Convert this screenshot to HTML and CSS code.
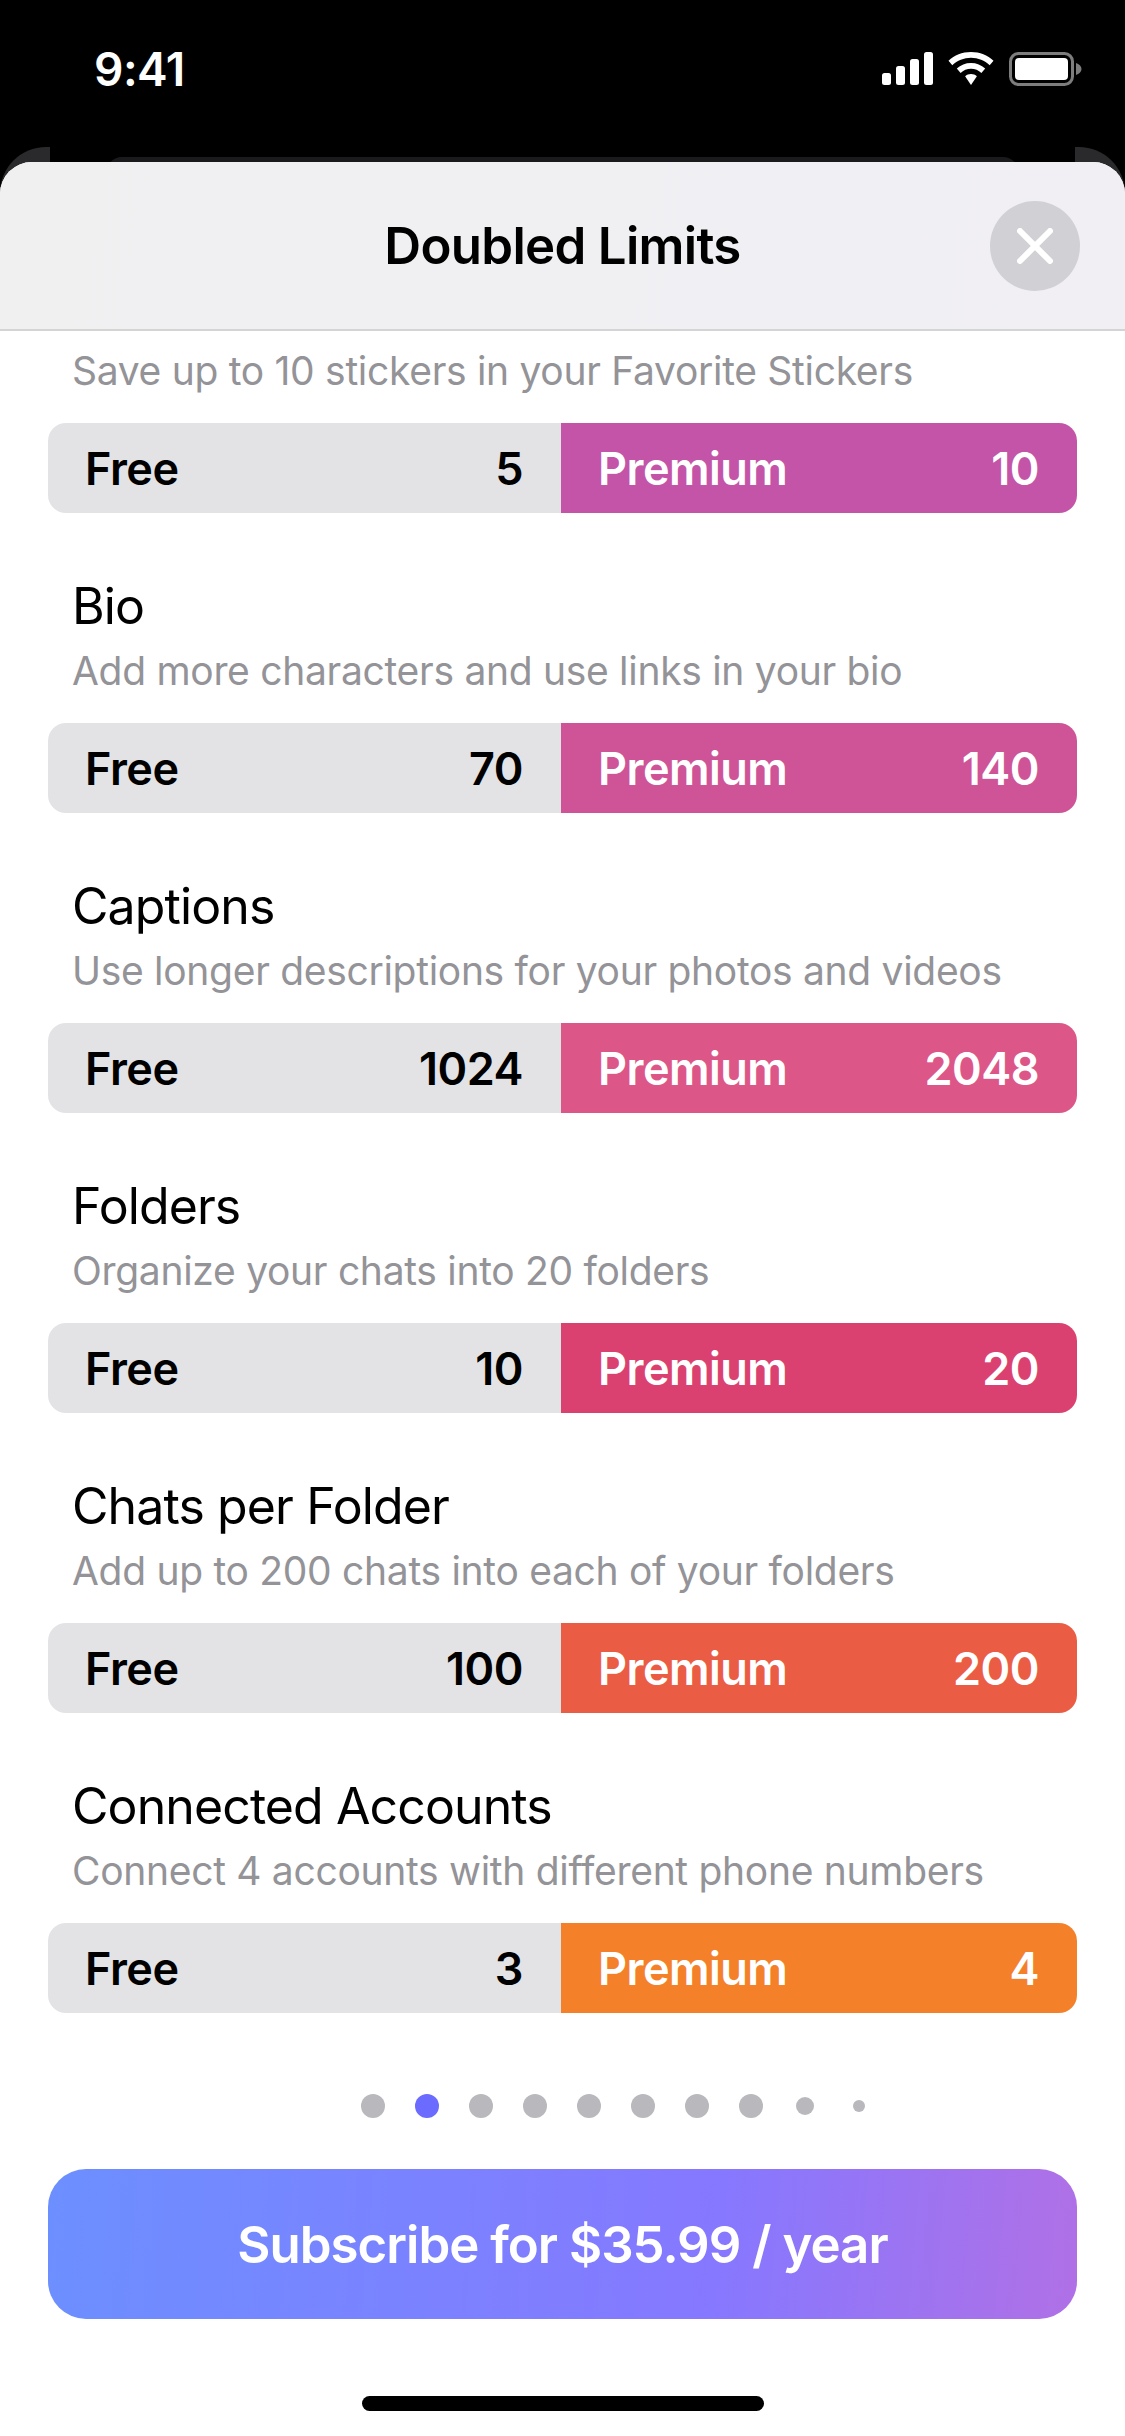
FILE: index.html
```html
<!DOCTYPE html>
<html lang="en">
<head>
  <meta charset="UTF-8">
  <meta name="viewport" content="width=device-width, initial-scale=1.0">
  <title>Doubled Limits</title>
  <link rel="stylesheet" href="styles.css">
</head>
<body>
  <div class="phone">
    <div class="status-bar">
      <span class="time">9:41</span>
      <div class="status-icons">
        <svg width="51" height="33" viewBox="0 0 51 33" fill="#fff">
          <rect x="0" y="21" width="9" height="12" rx="2.5"/>
          <rect x="14" y="14" width="9" height="19" rx="2.5"/>
          <rect x="28" y="7" width="9" height="26" rx="2.5"/>
          <rect x="42" y="0" width="9" height="33" rx="2.5"/>
        </svg>
        <svg width="46" height="33" viewBox="0 0 46 33" fill="#fff">
          <path d="M23 0C14 0 6.500 3.300 0.500 8.800L4.300 13.200C9.300 8.600 15.800 5.800 23 5.800S36.700 8.600 41.700 13.200L45.500 8.800C39.500 3.300 32 0 23 0Z"/>
          <path d="M23 11C17.500 11 12.700 13 8.800 16.500L12.600 20.900C15.400 18.400 19 16.800 23 16.800S30.600 18.400 33.400 20.900L37.200 16.500C33.300 13 28.500 11 23 11Z"/>
          <path d="M23 22C20.700 22 18.700 22.800 17.100 24.200L23 33L28.900 24.200C27.300 22.800 25.300 22 23 22Z"/>
        </svg>
        <svg width="73" height="34" viewBox="0 0 73 34">
          <rect x="1.500" y="1.500" width="62" height="31" rx="8" fill="none" stroke="#7d7d7d" stroke-width="3"/>
          <rect x="6" y="6" width="53" height="22" rx="4" fill="#fff"/>
          <path d="M67 11C70 12 72.500 14 72.500 17S70 22 67 23Z" fill="#7d7d7d"/>
        </svg>
      </div>
    </div>

    <div class="back-card back-card-left"></div>
    <div class="back-card back-card-right"></div>
    <div class="back-band"></div>

    <div class="sheet">
      <header class="sheet-header">
        <h1>Doubled Limits</h1>
        <button class="close-btn" type="button" aria-label="Close">
          <svg width="36" height="36" viewBox="0 0 36 36">
            <path d="M3 3L33 33M33 3L3 33" stroke="#fff" stroke-width="6" stroke-linecap="round"/>
          </svg>
        </button>
      </header>

      <div class="limits">
        <section class="limit limit-cut">
          <p class="limit-desc">Save up to 10 stickers in your Favorite Stickers</p>
          <div class="bar">
            <div class="bar-free"><span>Free</span><span>5</span></div>
            <div class="bar-premium c1"><span>Premium</span><span>10</span></div>
          </div>
        </section>
        <section class="limit">
          <h2>Bio</h2>
          <p class="limit-desc">Add more characters and use links in your bio</p>
          <div class="bar">
            <div class="bar-free"><span>Free</span><span>70</span></div>
            <div class="bar-premium c2"><span>Premium</span><span>140</span></div>
          </div>
        </section>
        <section class="limit">
          <h2>Captions</h2>
          <p class="limit-desc">Use longer descriptions for your photos and videos</p>
          <div class="bar">
            <div class="bar-free"><span>Free</span><span>1024</span></div>
            <div class="bar-premium c3"><span>Premium</span><span>2048</span></div>
          </div>
        </section>
        <section class="limit">
          <h2>Folders</h2>
          <p class="limit-desc">Organize your chats into 20 folders</p>
          <div class="bar">
            <div class="bar-free"><span>Free</span><span>10</span></div>
            <div class="bar-premium c4"><span>Premium</span><span>20</span></div>
          </div>
        </section>
        <section class="limit">
          <h2>Chats per Folder</h2>
          <p class="limit-desc">Add up to 200 chats into each of your folders</p>
          <div class="bar">
            <div class="bar-free"><span>Free</span><span>100</span></div>
            <div class="bar-premium c5"><span>Premium</span><span>200</span></div>
          </div>
        </section>
        <section class="limit">
          <h2>Connected Accounts</h2>
          <p class="limit-desc">Connect 4 accounts with different phone numbers</p>
          <div class="bar">
            <div class="bar-free"><span>Free</span><span>3</span></div>
            <div class="bar-premium c6"><span>Premium</span><span>4</span></div>
          </div>
        </section>
      </div>

      <div class="dots">
        <i class="dot"></i>
        <i class="dot active"></i>
        <i class="dot"></i>
        <i class="dot"></i>
        <i class="dot"></i>
        <i class="dot"></i>
        <i class="dot"></i>
        <i class="dot"></i>
        <i class="dot mid"></i>
        <i class="dot small"></i>
      </div>

      <button class="subscribe" type="button">Subscribe for $35.99 / year</button>
      <div class="home-indicator"></div>
    </div>
  </div>
</body>
</html>
```

FILE: styles.css
```css
* {
  box-sizing: border-box;
}
body {
  margin: 0;
  background: #000;
  font-family: Inter, "Liberation Sans", sans-serif;
}
.phone {
  position: relative;
  width: 1125px;
  height: 2436px;
  background: #000;
  overflow: hidden;
}

/* status bar */
.status-bar {
  height: 162px;
  display: flex;
  justify-content: space-between;
  align-items: flex-start;
  padding: 52px 43px 0 94px;
  color: #fff;
}
.time {
  font-size: 46px;
  font-weight: 600;
  line-height: 34px;
  letter-spacing: -0.5px;
}
.status-icons {
  display: flex;
  align-items: flex-start;
  gap: 15px;
}

/* cards peeking out behind the sheet */
.back-card {
  position: absolute;
  top: 147px;
  width: 50px;
  height: 60px;
  background: #2a2a2c;
}
.back-card-left {
  left: 0;
  border-top-left-radius: 46px;
}
.back-card-right {
  right: 0;
  border-top-right-radius: 46px;
}
.back-band {
  position: absolute;
  top: 157px;
  left: 106px;
  right: 106px;
  height: 20px;
  background: #1a1a1c;
  border-radius: 16px 16px 0 0;
}

.sheet {
  position: relative;
  height: 2274px;
  background: #fff;
  border-radius: 32px 32px 0 0;
  overflow: hidden;
}
.sheet-header {
  position: relative;
  height: 169px;
  display: flex;
  align-items: center;
  justify-content: center;
  background: linear-gradient(100deg, #f0f0f1 0%, #f0eff3 70%, #f1eff4 100%);
  border-bottom: 2px solid #d4d4d5;
}
.sheet-header h1 {
  margin: 0;
  font-size: 51px;
  font-weight: 600;
  letter-spacing: -0.7px;
  color: #000;
}
.close-btn {
  position: absolute;
  top: 39px;
  right: 45px;
  width: 90px;
  height: 90px;
  padding: 0;
  display: flex;
  align-items: center;
  justify-content: center;
  border: none;
  border-radius: 50%;
  background: #d1d0d5;
}

/* limit rows */
.limits {
  display: flex;
  flex-direction: column;
  gap: 63px;
  padding: 0 48px;
}
.limit h2 {
  margin: 0;
  padding-left: 24px;
  font-size: 50px;
  font-weight: 400;
  line-height: 60px;
  letter-spacing: -0.9px;
  color: #000;
}
.limit-desc {
  margin: 11px 0 0;
  padding-left: 24px;
  font-size: 39px;
  line-height: 48px;
  letter-spacing: -0.3px;
  color: #939398;
  white-space: nowrap;
}
.limit-cut .limit-desc {
  margin-top: 16px;
}
.bar {
  display: flex;
  height: 90px;
  margin-top: 28px;
  border-radius: 18px;
  overflow: hidden;
  font-size: 45px;
  font-weight: 600;
  letter-spacing: -0.5px;
}
.bar-free,
.bar-premium {
  display: flex;
  align-items: center;
  justify-content: space-between;
}
.bar-free {
  width: 513px;
  padding: 0 38px 0 37px;
  background: #e3e3e6;
  color: #000;
}
.bar-premium {
  flex: 1;
  padding: 0 38px 0 37px;
  color: #fff;
}
.c1 { background: #c354a8; }
.c2 { background: #ce5497; }
.c3 { background: #dd5688; }
.c4 { background: #db4170; }
.c5 { background: #eb5c45; }
.c6 { background: #f4812a; }

/* pager */
.dots {
  display: flex;
  justify-content: flex-start;
  align-items: center;
  height: 24px;
  margin-top: 81px;
  padding-left: 361px;
  gap: 30px;
}
.dot {
  display: block;
  flex: none;
  width: 24px;
  height: 24px;
  border-radius: 50%;
  background: #b8b8bd;
}
.dot.active {
  background: #6b6bff;
}
.dot.mid {
  width: 18px;
  height: 18px;
  margin: 0 3px;
}
.dot.small {
  width: 12px;
  height: 12px;
  margin: 0 6px;
}

.subscribe {
  display: block;
  width: 1029px;
  height: 150px;
  margin: 51px auto 0;
  border: none;
  border-radius: 38px;
  background: linear-gradient(95deg, #6c8fff 0%, #8678ff 65%, #b070e6 100%);
  color: #fff;
  font-family: inherit;
  font-size: 51px;
  font-weight: 600;
  letter-spacing: -1px;
}
.home-indicator {
  width: 402px;
  height: 15px;
  margin: 77px auto 0;
  border-radius: 8px;
  background: #000;
}
```
